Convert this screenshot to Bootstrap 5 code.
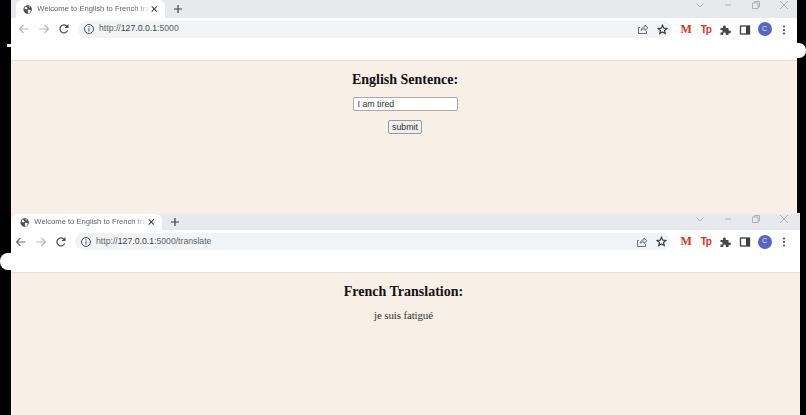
<!DOCTYPE html>
<html lang="en">
<head>
    <meta charset="UTF-8">
    <meta name="viewport" content="width=device-width, initial-scale=1.0">
    <title>English to French</title>
    <link href="https://cdn.jsdelivr.net/npm/bootstrap@5.3.0/dist/css/bootstrap.min.css" rel="stylesheet">
    <style>
        html, body { height: 415px; overflow: hidden; }
        body { background: #000; font-family: "Liberation Sans", Arial, sans-serif; position: relative; }
        .win-one { margin-left: 11px; width: 786px; height: 213px; }
        .win-two { margin-left: 11px; width: 789px; height: 202px; }
        .tab-strip { background: #e7e9ed; height: 18px; }
        .win-two .tab-strip { height: 16px; margin-top: 1px; }
        .win-two .strip-wrap { background: #f8efe6; }
        .tab-shape { background: #fff; width: 149px; height: 100%; margin-left: 5px; padding: 0 7px; border-radius: 6px 6px 0 0; }
        .win-two .tab-shape { margin-left: 0; width: 151px; padding-left: 9px; }
        .tab-title { color: #5f6368; font-size: 7.6px; width: 113px; margin-left: 5px; white-space: nowrap; -webkit-mask-image: linear-gradient(90deg, #000 88%, transparent); mask-image: linear-gradient(90deg, #000 88%, transparent); }
        .tab-plus { margin-left: 8px; }
        .win-btns { padding-right: 8px; gap: 18px; }
        .win-two .win-btns { padding-right: 11px; }
        .tool-row { background: #fff; height: 22px; padding-left: 7px; padding-right: 3px; }
        .win-two .tool-row { height: 23px; padding-left: 4px; padding-right: 6px; }
        .nav-ico { width: 20px; }
        .addr-bar { background: #f1f3f4; height: 17px; border-radius: 9px; margin-right: 4px; padding: 0 4px 0 5px; color: #5f6368; font-size: 8.7px; }
        .win-two .addr-bar { margin-right: 6px; padding-right: 3px; }
        .addr-bar b { font-weight: 400; color: #3c4043; }
        .ext-slot { width: 19.6px; }
        .ext-m { color: #d93025; font: 700 12px "Liberation Serif", serif; }
        .ext-tp { color: #d93025; font: 700 10px "Liberation Sans", sans-serif; letter-spacing: -1px; }
        .avatar-dot { width: 14px; height: 14px; background: #5865c3; color: #e8eaf6; font-size: 7px; }
        .blank-band { background: #fff; height: 21px; border-bottom: 1px solid #e6ded6; }
        .win-two .blank-band { height: 20px; }
        .page-area { background: #f8efe6; flex: 1; font-family: "Liberation Serif", serif; color: #111; }
        .page-head { font: 700 14px/17px "Liberation Serif", serif; margin: 0; }
        .win-one .page-head { padding-top: 10px; padding-left: 2px; }
        .win-two .page-head { padding-top: 10px; padding-right: 4px; }
        .sentence-input { width: 105px; height: 14px; padding: 0 4px; margin: 9px 0 0 2px; font: 8.8px "Liberation Sans", sans-serif; color: #333; border: 1px solid #a9a9a9; border-radius: 2px; background: #fff; }
        .sentence-btn { height: 14px; width: 34px; margin: 9px 0 0 2px; padding: 0; font: 8.8px "Liberation Sans", sans-serif; color: #333; background: #efefef; border: 1px solid #9a9a9a; border-radius: 2px; line-height: 1; }
        .result-text { font-size: 11px; letter-spacing: -.15px; line-height: 16px; margin: 7px 0 0; padding-right: 4px; color: #333; }
        .edge-blob { position: absolute; background: #fff; }
        .blob-a { left: 7px; top: 44px; width: 5px; height: 3px; }
        .blob-b { left: 796px; top: 43px; width: 10px; height: 15px; border-radius: 0 7px 7px 0; }
        .blob-c { left: 0; top: 253px; width: 12px; height: 17px; border-radius: 8px 0 0 8px; }
    </style>
</head>
<body>
    <svg width="0" height="0" class="d-block position-absolute">
        <symbol id="i-globe" viewBox="0 0 12 12"><circle cx="6" cy="6" r="5.4" fill="#4a4d52"/><path d="M3 2l2 1 1 2-2 1-2-1zM7 6l3 1-1 3-2 1-1-3zM7 1.500l2 1-1 1.500z" fill="#fff"/></symbol>
        <symbol id="i-close" viewBox="0 0 10 10"><path d="M2 2l6 6M8 2l-6 6" stroke="#3c4043" stroke-width="1.2" fill="none"/></symbol>
        <symbol id="i-plus" viewBox="0 0 10 10"><path d="M5 1v8M1 5h8" stroke="#3c4043" stroke-width="1.2" fill="none"/></symbol>
        <symbol id="i-left" viewBox="0 0 12 12"><path d="M10.500 6h-9M5.500 2l-4 4 4 4" fill="none" stroke="currentColor" stroke-width="1.2"/></symbol>
        <symbol id="i-right" viewBox="0 0 12 12"><path d="M1.500 6h9M6.500 2l4 4-4 4" fill="none" stroke="currentColor" stroke-width="1.2"/></symbol>
        <symbol id="i-reload" viewBox="0 0 12 12"><path d="M9.600 7.500A4 4 0 1 1 9 3.300" fill="none" stroke="#44474a" stroke-width="1.200"/><path d="M10.500 1v4h-4z" fill="#44474a"/></symbol>
        <symbol id="i-info" viewBox="0 0 12 12"><circle cx="6" cy="6" r="4.500" fill="none" stroke="#4a4d52"/><path d="M6 5.300v3.200M6 3.300v1.100" stroke="#4a4d52"/></symbol>
        <symbol id="i-share" viewBox="0 0 12 12"><path d="M3 4.500H1.500v6h8V8M4 7.500C4.500 5 6 3.800 8 3.800V2l3 2.800L8 7.500V5.800c-1.500 0-3 .5-4 1.700z" fill="none" stroke="#5f6368" stroke-width=".9"/></symbol>
        <symbol id="i-star" viewBox="0 0 12 12"><path d="M6 1.300l1.400 3.200 3.400.3-2.600 2.300.8 3.400L6 8.700 3 10.500l.8-3.400L1.200 4.800l3.400-.3z" fill="none" stroke="#3c4043" stroke-width="1.300"/></symbol>
        <symbol id="i-puzzle" viewBox="0 0 12 12"><path d="M1.500 4H4V2.800a1.400 1.400 0 0 1 2.800 0V4h2.700v2.500h1a1.400 1.400 0 0 1 0 2.800h-1V11H6.800V9.800a1.300 1.300 0 0 0-2.600 0V11H1.500V8.500h.8a1.300 1.300 0 0 0 0-2.600h-.8z" fill="#45484c"/></symbol>
        <symbol id="i-panel" viewBox="0 0 12 12"><rect x="1.500" y="2" width="9" height="8" fill="none" stroke="#3c4043" stroke-width="1.300"/><rect x="7" y="2" width="3.500" height="8" fill="#3c4043"/></symbol>
        <symbol id="i-dots" viewBox="0 0 4 12"><circle cx="2" cy="2.500" r="1" fill="#44474a"/><circle cx="2" cy="6" r="1" fill="#44474a"/><circle cx="2" cy="9.500" r="1" fill="#44474a"/></symbol>
        <symbol id="i-chev" viewBox="0 0 10 10"><path d="M1.500 3.500L5 7l3.500-3.500" fill="none" stroke="#aeb1b6"/></symbol>
        <symbol id="i-min" viewBox="0 0 10 10"><path d="M2 5h6" stroke="#aeb1b6"/></symbol>
        <symbol id="i-max" viewBox="0 0 10 10"><path d="M1.500 3h5.500v5.500H1.500zM3.500 3V1.500h5V7H7" fill="none" stroke="#aeb1b6"/></symbol>
        <symbol id="i-x" viewBox="0 0 10 10"><path d="M1 1l8 8M9 1l-8 8" stroke="#aeb1b6"/></symbol>
    </svg>

    <div class="win-one d-flex flex-column">
        <div class="tab-strip d-flex">
            <div class="tab-shape d-flex align-items-center">
                <svg width="11" height="11"><use href="#i-globe"/></svg>
                <span class="tab-title">Welcome to English to French tra</span>
                <svg width="10" height="10"><use href="#i-close"/></svg>
            </div>
            <div class="d-flex align-items-center tab-plus"><svg width="10" height="10"><use href="#i-plus"/></svg></div>
            <div class="win-btns d-flex align-items-start ms-auto">
                <svg width="10" height="10"><use href="#i-chev"/></svg>
                <svg width="10" height="10"><use href="#i-min"/></svg>
                <svg width="10" height="10"><use href="#i-max"/></svg>
                <svg width="10" height="10"><use href="#i-x"/></svg>
            </div>
        </div>
        <div class="tool-row d-flex align-items-center">
            <span class="nav-ico text-secondary opacity-50"><svg width="12" height="12" class="d-block"><use href="#i-left"/></svg></span>
            <span class="nav-ico text-secondary opacity-50"><svg width="12" height="12" class="d-block"><use href="#i-right"/></svg></span>
            <span class="nav-ico"><svg width="12" height="12" class="d-block"><use href="#i-reload"/></svg></span>
            <div class="addr-bar d-flex align-items-center flex-grow-1 gap-1">
                <svg width="12" height="12"><use href="#i-info"/></svg>
                <span><span>http://</span><b>127.0.0.1</b>:5000</span>
                <svg width="12" height="12" class="ms-auto"><use href="#i-share"/></svg>
                <svg width="11" height="11" class="ms-1"><use href="#i-star"/></svg>
            </div>
            <span class="ext-slot text-center ext-m">M</span>
            <span class="ext-slot text-center ext-tp">Tp</span>
            <span class="ext-slot text-center"><svg width="12" height="12"><use href="#i-puzzle"/></svg></span>
            <span class="ext-slot text-center"><svg width="12" height="12"><use href="#i-panel"/></svg></span>
            <span class="ext-slot d-flex justify-content-center"><span class="avatar-dot rounded-circle d-flex align-items-center justify-content-center">C</span></span>
            <span class="ext-slot text-center"><svg width="4" height="12"><use href="#i-dots"/></svg></span>
        </div>
        <div class="blank-band"></div>
        <div class="page-area text-center">
            <h1 class="page-head">English Sentence:</h1>
            <form class="d-flex flex-column align-items-center" onsubmit="return false">
                <input type="text" class="sentence-input" value="I am tired">
                <button type="submit" class="sentence-btn">submit</button>
            </form>
        </div>
    </div>

    <div class="win-two d-flex flex-column">
        <div class="strip-wrap">
            <div class="tab-strip d-flex">
                <div class="tab-shape d-flex align-items-center">
                    <svg width="11" height="11"><use href="#i-globe"/></svg>
                    <span class="tab-title">Welcome to English to French tra</span>
                    <svg width="10" height="10"><use href="#i-close"/></svg>
                </div>
                <div class="d-flex align-items-center tab-plus"><svg width="10" height="10"><use href="#i-plus"/></svg></div>
                <div class="win-btns d-flex align-items-start ms-auto">
                    <svg width="10" height="10"><use href="#i-chev"/></svg>
                    <svg width="10" height="10"><use href="#i-min"/></svg>
                    <svg width="10" height="10"><use href="#i-max"/></svg>
                    <svg width="10" height="10"><use href="#i-x"/></svg>
                </div>
            </div>
        </div>
        <div class="tool-row d-flex align-items-center">
            <span class="nav-ico text-secondary"><svg width="12" height="12" class="d-block"><use href="#i-left"/></svg></span>
            <span class="nav-ico text-secondary opacity-50"><svg width="12" height="12" class="d-block"><use href="#i-right"/></svg></span>
            <span class="nav-ico"><svg width="12" height="12" class="d-block"><use href="#i-reload"/></svg></span>
            <div class="addr-bar d-flex align-items-center flex-grow-1 gap-1">
                <svg width="12" height="12"><use href="#i-info"/></svg>
                <span><span>http://</span><b>127.0.0.1</b>:5000/translate</span>
                <svg width="12" height="12" class="ms-auto"><use href="#i-share"/></svg>
                <svg width="11" height="11" class="ms-1"><use href="#i-star"/></svg>
            </div>
            <span class="ext-slot text-center ext-m">M</span>
            <span class="ext-slot text-center ext-tp">Tp</span>
            <span class="ext-slot text-center"><svg width="12" height="12"><use href="#i-puzzle"/></svg></span>
            <span class="ext-slot text-center"><svg width="12" height="12"><use href="#i-panel"/></svg></span>
            <span class="ext-slot d-flex justify-content-center"><span class="avatar-dot rounded-circle d-flex align-items-center justify-content-center">C</span></span>
            <span class="ext-slot text-center"><svg width="4" height="12"><use href="#i-dots"/></svg></span>
        </div>
        <div class="blank-band"></div>
        <div class="page-area text-center">
            <h1 class="page-head">French Translation:</h1>
            <p class="result-text">je suis fatigué</p>
        </div>
    </div>

    <div class="edge-blob blob-a"></div>
    <div class="edge-blob blob-b"></div>
    <div class="edge-blob blob-c"></div>

    <script src="https://cdn.jsdelivr.net/npm/bootstrap@5.3.0/dist/js/bootstrap.bundle.min.js"></script>
</body>
</html>
